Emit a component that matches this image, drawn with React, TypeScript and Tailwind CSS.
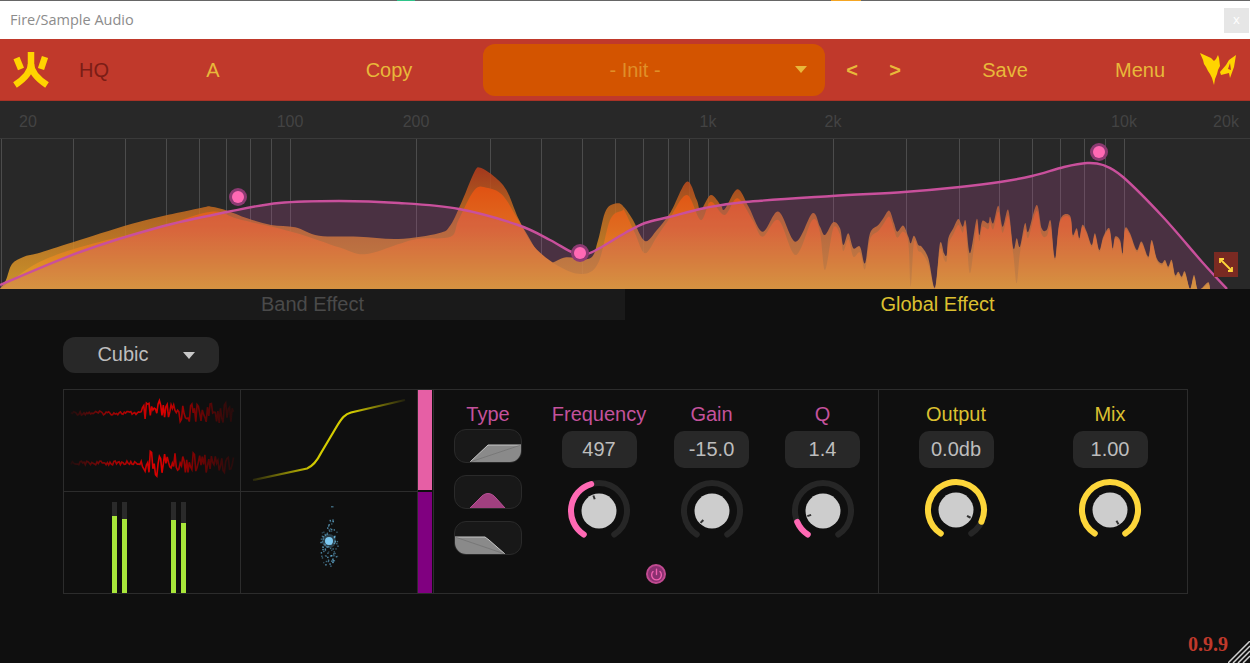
import { Power } from "lucide-react";

type Pt = [number, number];

const rnd = (i: number) => {
  const s = Math.sin(i * 12.9898) * 43758.5453;
  return s - Math.floor(s);
};

// smooth line through points, catmull-rom to bezier
function smooth(pts: Pt[]) {
  let d = `M${pts[0][0].toFixed(1)} ${pts[0][1].toFixed(1)}`;
  for (let i = 0; i < pts.length - 1; i++) {
    const p0 = pts[Math.max(i - 1, 0)];
    const p1 = pts[i];
    const p2 = pts[i + 1];
    const p3 = pts[Math.min(i + 2, pts.length - 1)];
    const c1x = p1[0] + (p2[0] - p0[0]) / 6;
    const c1y = p1[1] + (p2[1] - p0[1]) / 6;
    const c2x = p2[0] - (p3[0] - p1[0]) / 6;
    const c2y = p2[1] - (p3[1] - p1[1]) / 6;
    d += `C${c1x.toFixed(1)} ${c1y.toFixed(1)} ${c2x.toFixed(1)} ${c2y.toFixed(1)} ${p2[0].toFixed(1)} ${p2[1].toFixed(1)}`;
  }
  return d;
}

const GRAPH_TOP = 101;
// traced in crop units: left half, right half, and the high end of the graph
const left = (p: Pt[]): Pt[] => p.map(([x, y]) => [x / 2.508, 140 + y / 3 - GRAPH_TOP]);
const right = (p: Pt[]): Pt[] => p.map(([x, y]) => [625 + x / 2.508, 140 + y / 3 - GRAPH_TOP]);
const high = (p: Pt[]): Pt[] => p.map(([x, y]) => [820 + x / 3, 195 + y / 3 - GRAPH_TOP]);

const highTrace: Pt[] = [
  [0, 95], [15, 120], [40, 82], [60, 100], [70, 150], [85, 115], [100, 160], [120, 155], [135, 205], [150, 115], [175, 90], [190, 70], [208, 47], [222, 85], [232, 110], [250, 92], [265, 125], [272, 145], [282, 122], [295, 150], [305, 155], [325, 190], [345, 278], [360, 145], [372, 175], [380, 180], [385, 130], [400, 100], [415, 72], [428, 95], [437, 78], [450, 175], [470, 72], [478, 120], [487, 78], [505, 85], [510, 65], [520, 85], [535, 32], [548, 95], [565, 45], [580, 160], [590, 130], [600, 155], [615, 85], [625, 110], [650, 30], [665, 100], [680, 105], [692, 78], [705, 190], [720, 75], [750, 62], [758, 120], [770, 100], [778, 130], [787, 90], [800, 110], [815, 150], [825, 115], [838, 165], [850, 125], [868, 100], [878, 160], [885, 125], [900, 135], [908, 175], [915, 100], [930, 115], [950, 165], [965, 140], [985, 185], [995, 135], [1010, 190], [1025, 205], [1035, 195], [1045, 215], [1055, 195], [1065, 240], [1075, 230], [1085, 245], [1095, 230], [1110, 282], [1122, 240], [1132, 282], [1145, 280], [1165, 262], [1170, 282],
];

// the front layer sits a little lower and has the deep notches
const notches: Record<number, number> = { 15: 225, 100: 185, 272: 275, 450: 235, 590: 265 };
const highFront: Pt[] = highTrace.map(([x, y]) => [x, notches[x] ?? Math.min(282, y + (x < 700 ? 18 : 6))]);

const backPts: Pt[] = [
  ...left([[0, 447], [15, 420], [30, 372], [60, 350], [100, 338], [200, 300], [350, 245], [500, 205], [530, 200], [570, 212], [620, 235], [680, 255], [740, 262], [800, 287], [900, 290], [1000, 297], [1100, 280], [1130, 255], [1160, 180], [1190, 95], [1205, 83], [1240, 110], [1270, 150], [1300, 235], [1330, 300], [1360, 360], [1380, 370], [1420, 352], [1480, 355], [1500, 300], [1520, 210], [1550, 190]]),
  ...right([[0, 205], [20, 240], [50, 303], [80, 270], [115, 215], [155, 125], [180, 180], [190, 210], [215, 165], [240, 195], [250, 208], [282, 148], [310, 200], [345, 275], [385, 215], [428, 305], [470, 220]]),
  ...high(highTrace),
];

const frontPts: Pt[] = [
  ...left([[0, 447], [40, 412], [100, 365], [200, 322], [400, 260], [530, 215], [600, 238], [740, 278], [850, 322], [915, 343], [1000, 312], [1050, 296], [1130, 290], [1150, 240], [1190, 150], [1220, 143], [1260, 165], [1300, 240], [1340, 320], [1400, 378], [1460, 402], [1500, 370], [1530, 240], [1560, 212]]),
  ...right([[0, 215], [25, 280], [50, 340], [80, 290], [112, 235], [155, 165], [190, 240], [215, 185], [250, 225], [282, 175], [320, 240], [345, 290], [385, 240], [428, 345], [470, 240]]),
  ...high(highFront),
];

const curvePts: Pt[] = [
  [0, 285], [80, 252], [160, 227], [227, 212], [279, 203], [339, 201], [399, 203], [459, 209], [518, 225], [550, 240], [574, 253], [590, 253], [625, 233], [645, 223], [669, 217], [705, 208], [745, 202], [832, 196], [904, 192], [960, 187], [1000, 182], [1032, 176], [1064, 167], [1087, 163], [1103, 165], [1123, 177], [1163, 217], [1203, 263], [1227, 289],
].map(([x, y]) => [x, y - GRAPH_TOP] as Pt);

const gridXs = [1, 73, 125, 166, 199, 226, 250, 271, 290, 416, 490, 541, 582, 615, 643, 668, 689, 708, 833, 906, 959, 999, 1032, 1060, 1084, 1105, 1124];
const axis: [string, number][] = [["20", 28], ["100", 290], ["200", 416], ["1k", 708], ["2k", 833], ["10k", 1124], ["20k", 1226]];

function Graph() {
  const H = 188;
  const closed = (pts: Pt[]) => `${smooth(pts)}L${pts[pts.length - 1][0]} ${H}L0 ${H}Z`;
  return (
    <svg width="1250" height={H} className="block">
      <defs>
        <linearGradient id="backFill" gradientUnits="userSpaceOnUse" x1="0" y1="60" x2="0" y2="188">
          <stop offset="0" stopColor="#b8331a" />
          <stop offset="0.35" stopColor="#c4681f" />
          <stop offset="1" stopColor="#e6a82c" />
        </linearGradient>
        <linearGradient id="frontFill" gradientUnits="userSpaceOnUse" x1="0" y1="70" x2="0" y2="188">
          <stop offset="0" stopColor="#e0480e" />
          <stop offset="0.5" stopColor="#e06c20" />
          <stop offset="1" stopColor="#dca626" />
        </linearGradient>
      </defs>
      <rect width="1250" height={H} fill="#282828" />
      <rect y="37" width="1250" height="1" fill="#3a3a3a" />
      {gridXs.map((x) => (
        <rect key={x} x={x} y="38" width="1" height={H - 38} fill="#4c4c4c" />
      ))}
      {axis.map(([t, x]) => (
        <text key={t} x={x} y="26" textAnchor="middle" fontSize="16" fill="#434343" fontFamily="'Liberation Sans', sans-serif">
          {t}
        </text>
      ))}
      <path d={closed(backPts)} fill="url(#backFill)" opacity="0.85" />
      <path d={closed(frontPts)} fill="url(#frontFill)" />
      <path d={closed(curvePts)} fill="#c0509a" opacity="0.23" />
      <path d={smooth(curvePts)} fill="none" stroke="#c9509c" strokeWidth="2.4" />
      {[[238, 96], [580, 152], [1099, 51]].map(([x, y]) => (
        <g key={x}>
          <circle cx={x} cy={y} r="9" fill="#8c3a72" />
          <circle cx={x} cy={y} r="6" fill="#ff69b4" />
        </g>
      ))}
    </svg>
  );
}

function FireLogo() {
  return (
    <svg width="40" height="40" viewBox="0 0 40 40" fill="none" stroke="#ffd400" strokeWidth="6.5">
      <path d="M20 2V14C20 22 13 29 4 35" />
      <path d="M20 14C20 22 27 29 36 35" />
      <path d="M5.5 8L10 19" />
      <path d="M34 7L30 19" />
    </svg>
  );
}

function WingLogo() {
  return (
    <svg width="40" height="36" viewBox="0 0 40 36" fill="#ffd400">
      <path d="M1 1L12 6L15 9L17 7L19 3L20 6L21 14L19 18L18 22L16 27L15 33L13 26L11 22L9 19L7 15L5 12L4 8Z" />
      <path fillRule="evenodd" d="M37 3L35 15L31 26L30 21L22 23L21 20L27 13L30 8ZM31 11L29 17L32 18Z" />
    </svg>
  );
}

function Caret({ className }: { className: string }) {
  return (
    <svg width="12" height="7" viewBox="0 0 12 7" className={className}>
      <path d="M0 0H12L6 7Z" fill="currentColor" />
    </svg>
  );
}

function Header() {
  const text = "text-[20px] text-[#e8b83a] text-center";
  return (
    <div className="flex h-[62px] items-center bg-[#c0392b] border-b border-[#a93226]">
      <div className="flex w-[62px] justify-center pr-[1px]">
        <FireLogo />
      </div>
      <div className="w-[64px] text-center text-[20px] text-[#7b1d16]">HQ</div>
      <div className={`w-[174px] ${text}`}>A</div>
      <div className={`w-[178px] ${text}`}>Copy</div>
      <div className="ml-[5px] flex h-[52px] w-[342px] items-center rounded-[12px] bg-[#d35400]">
        <div className="w-[304px] text-center text-[20px] text-[#e08f28]">- Init -</div>
        <Caret className="ml-[8px] text-[#e8b83a]" />
      </div>
      <div className={`w-[54px] font-bold ${text}`}>&lt;</div>
      <div className={`w-[32px] font-bold ${text}`}>&gt;</div>
      <div className={`w-[188px] ${text}`}>Save</div>
      <div className={`w-[82px] ${text}`}>Menu</div>
      <div className="flex flex-1 pl-[18px]">
        <WingLogo />
      </div>
    </div>
  );
}

function wavePath(seed: number, mid: number) {
  const pts: string[] = [];
  let i = 0;
  for (let x = 7; x < 170; x += 1.3) {
    let amp = 2;
    if (x > 78 && x < 106) amp = 15 - Math.abs(x - 92) * 0.5;
    else if (x >= 106) amp = 10;
    const y = mid + (rnd(i + seed) - 0.5) * 2 * amp;
    pts.push(`${i === 0 ? "M" : "L"}${x.toFixed(1)} ${y.toFixed(1)}`);
    i++;
  }
  return pts.join("");
}

function WaveScope() {
  return (
    <svg width="176" height="101" className="block">
      <defs>
        <linearGradient id="waveFade" gradientUnits="userSpaceOnUse" x1="7" y1="0" x2="170" y2="0">
          <stop offset="0" stopColor="#c00000" stopOpacity="0.1" />
          <stop offset="0.25" stopColor="#c00000" stopOpacity="0.8" />
          <stop offset="0.55" stopColor="#e00000" />
          <stop offset="0.75" stopColor="#900000" stopOpacity="0.85" />
          <stop offset="1" stopColor="#800000" stopOpacity="0.2" />
        </linearGradient>
      </defs>
      <path d={wavePath(5, 23)} fill="none" stroke="url(#waveFade)" strokeWidth="1.6" />
      <path d={wavePath(90, 73)} fill="none" stroke="url(#waveFade)" strokeWidth="1.6" />
    </svg>
  );
}

function TransferScope() {
  return (
    <svg width="175" height="101" className="block">
      <defs>
        <linearGradient id="transferFade" gradientUnits="userSpaceOnUse" x1="12" y1="0" x2="164" y2="0">
          <stop offset="0" stopColor="#c8c000" stopOpacity="0.15" />
          <stop offset="0.4" stopColor="#d4cc00" />
          <stop offset="0.65" stopColor="#d4cc00" />
          <stop offset="1" stopColor="#c8c000" stopOpacity="0.1" />
        </linearGradient>
      </defs>
      <path d="M12 90L66 78.5C72 76 76 71 80 63L96 36C101 28 104 24 110 22.5L164 10" fill="none" stroke="url(#transferFade)" strokeWidth="2.2" />
    </svg>
  );
}

function Meters() {
  return (
    <div className="flex h-full items-end pl-[48px]">
      <div className="flex gap-[5px]">
        <div className="flex h-[91px] w-[5px] items-end bg-[#2a2a2a]"><div className="h-[77px] w-full bg-[#a8e63a]" /></div>
        <div className="flex h-[91px] w-[5px] items-end bg-[#2a2a2a]"><div className="h-[74px] w-full bg-[#a8e63a]" /></div>
      </div>
      <div className="ml-[44px] flex gap-[5px]">
        <div className="flex h-[91px] w-[5px] items-end bg-[#2a2a2a]"><div className="h-[73px] w-full bg-[#a8e63a]" /></div>
        <div className="flex h-[91px] w-[5px] items-end bg-[#2a2a2a]"><div className="h-[70px] w-full bg-[#a8e63a]" /></div>
      </div>
    </div>
  );
}

function Vectorscope() {
  const cx = 88;
  const cy = 49;
  const dots = Array.from({ length: 90 }, (_, i) => {
    const a = rnd(i + 7) * Math.PI * 2;
    const r = Math.sqrt(rnd(i + 200));
    return { x: cx + Math.cos(a) * r * 9, y: cy + 2 + Math.sin(a) * r * 26, o: 0.3 + rnd(i + 500) * 0.5 };
  });
  return (
    <svg width="175" height="101" className="block">
      {dots.map((d, i) => (
        <rect key={i} x={d.x} y={d.y} width="1.4" height="1.4" fill="#6ab8e0" opacity={d.o} />
      ))}
      <rect x="90" y="14" width="2.5" height="1.5" fill="#6ab8e0" opacity="0.5" />
      <circle cx={cx} cy={cy} r="7" fill="#7cc8f0" opacity="0.25" />
      <circle cx={cx} cy={cy} r="4" fill="#7cc8f0" />
    </svg>
  );
}

function Knob({ value, pointer, color }: { value: number; pointer: number; color: string }) {
  const gap = 147;
  const polar = (deg: number, r: number): Pt => {
    const a = (deg * Math.PI) / 180;
    return [33 + Math.sin(a) * r, 33 - Math.cos(a) * r];
  };
  const arc = (from: number, to: number) => {
    const [x1, y1] = polar(from, 28);
    const [x2, y2] = polar(to, 28);
    return `M${x1} ${y1}A28 28 0 ${to - from > 180 ? 1 : 0} 1 ${x2} ${y2}`;
  };
  const [tx1, ty1] = polar(pointer, 12.5);
  const [tx2, ty2] = polar(pointer, 16.5);
  return (
    <svg width="66" height="66" className="block">
      <path d={arc(-gap, gap)} fill="none" stroke="#262626" strokeWidth="6" strokeLinecap="round" />
      {value > 0 && (
        <path d={arc(-gap, -gap + value * gap * 2)} fill="none" stroke={color} strokeWidth="6" strokeLinecap="round" />
      )}
      <circle cx="33" cy="33" r="17.5" fill="#cdcdcd" />
      <line x1={tx1} y1={ty1} x2={tx2} y2={ty2} stroke="#333" strokeWidth="2" />
    </svg>
  );
}

function Control({ label, value, labelClass, children }: { label: string; value: string; labelClass: string; children: React.ReactNode }) {
  return (
    <div className="flex flex-col items-center pt-[13px]">
      <div className={`h-[23px] text-[20px] leading-[23px] ${labelClass}`}>{label}</div>
      <div className="mt-[5px] flex h-[37px] w-[75px] items-center justify-center rounded-[10px] bg-[#282828] pb-[2px] text-[20px] text-[#bdbdbd]">
        {value}
      </div>
      <div className="mt-[10px]">{children}</div>
    </div>
  );
}

function TypeButton({ children }: { children: React.ReactNode }) {
  return (
    <div className="h-[34px] w-[68px] overflow-hidden rounded-[12px] border border-[#2a2a2a] bg-[#181818]">
      <svg width="66" height="32" className="block">{children}</svg>
    </div>
  );
}

function TypeColumn() {
  return (
    <div className="flex w-[108px] flex-col items-center pt-[13px]">
      <div className="h-[23px] text-[20px] leading-[23px] text-[#c4529c]">Type</div>
      <div className="mt-[3px] flex flex-col gap-[12px]">
        <TypeButton>
          <path d="M15 32L33 15H66V32Z" fill="#8a8a8a" />
          <path d="M15 32L33 15H66" fill="none" stroke="#c8c8c8" strokeWidth="1" />
          <path d="M15 32L66 15" stroke="#6c6c6c" strokeWidth="0.6" />
        </TypeButton>
        <TypeButton>
          <path d="M15 32L25 22C30 16 36 16 41 22L50 32Z" fill="#a0407f" />
          <path d="M15 32L25 22C30 16 36 16 41 22L50 32" fill="none" stroke="#b85095" strokeWidth="1" />
        </TypeButton>
        <TypeButton>
          <path d="M0 15H30L34 18L50 32H0Z" fill="#8a8a8a" />
          <path d="M0 15H30L34 18L50 32" fill="none" stroke="#c8c8c8" strokeWidth="1" />
          <path d="M0 15L50 32" stroke="#6c6c6c" strokeWidth="0.6" />
        </TypeButton>
      </div>
    </div>
  );
}

export default function App() {
  const pink = "#ff69b4";
  const yellow = "#fdd63a";
  return (
    <div className="relative flex h-[663px] w-[1250px] flex-col overflow-hidden bg-[#0f0f0f] font-['Liberation_Sans',sans-serif]">
      <div className="flex h-[39px] flex-col bg-white">
        <div className="flex h-px">
          <div className="w-[397px] bg-[#666]" />
          <div className="w-[18px] bg-[#2fc48a]" />
          <div className="w-[416px] bg-[#666]" />
          <div className="w-[30px] bg-[#f5a623]" />
          <div className="flex-1 bg-[#666]" />
        </div>
        <div className="flex flex-1 items-center justify-between pl-[10px] pr-px">
          <span className="font-['Open_Sans',sans-serif] text-[14.5px] text-[#8c8c8c]">Fire/Sample Audio</span>
          <div className="flex h-[25px] w-[25px] items-center justify-center bg-[#e6e6e6] font-['Open_Sans',sans-serif] text-[13px] text-white">
            x
          </div>
        </div>
      </div>

      <Header />

      <div className="relative h-[188px]">
        <Graph />
        <div className="absolute left-[1214px] top-[151px] flex h-[25px] w-[24px] items-center justify-center bg-[#7a2a22]">
          <svg width="14" height="14" viewBox="0 0 14 14" fill="none" stroke="#ffd63a" strokeWidth="1.8">
            <path d="M2 2L12 12" />
            <path d="M1 5V1H5" />
            <path d="M13 9V13H9" />
          </svg>
        </div>
      </div>

      <div className="flex h-[31px] text-[20px]">
        <div className="flex w-[625px] items-center justify-center bg-[#1a1a1a] pb-[2px] text-[#4a4a4a]">Band Effect</div>
        <div className="flex flex-1 items-center justify-center pb-[2px] text-[#dcc030]">Global Effect</div>
      </div>

      <div className="ml-[63px] mt-[17px] flex h-[36px] w-[156px] items-center rounded-[12px] bg-[#282828] text-[20px] text-[#bdbdbd]">
        <div className="w-[120px] pb-[2px] text-center">Cubic</div>
        <Caret className="text-[#c8c8c8]" />
      </div>

      <div className="ml-[63px] mt-[16px] flex h-[205px]">
        <div className="grid w-[355px] grid-cols-[177px_176px] grid-rows-[102px_101px] border border-[#2c2c2c]">
          <div className="border-b border-r border-[#2c2c2c]"><WaveScope /></div>
          <div className="border-b border-[#2c2c2c]"><TransferScope /></div>
          <div className="border-r border-[#2c2c2c]"><Meters /></div>
          <div><Vectorscope /></div>
        </div>

        <div className="flex w-[15px] flex-col gap-[2px] border-y border-[#2c2c2c] pr-px">
          <div className="h-[100px] bg-[#e65fa5]" />
          <div className="flex-1 bg-[#800080]" />
        </div>

        <div className="flex w-[446px] flex-col items-center border border-[#2c2c2c]">
          <div className="flex w-full">
            <TypeColumn />
            <div className="w-[114px]">
              <Control label="Frequency" value="497" labelClass="text-[#c4529c]">
                <Knob value={0.445} pointer={-20} color={pink} />
              </Control>
            </div>
            <div className="w-[111px]">
              <Control label="Gain" value="-15.0" labelClass="text-[#c4529c]">
                <Knob value={0} pointer={-136} color={pink} />
              </Control>
            </div>
            <div className="w-[111px]">
              <Control label="Q" value="1.4" labelClass="text-[#c4529c]">
                <Knob value={0.116} pointer={-108} color={pink} />
              </Control>
            </div>
          </div>
          <div className="mt-[9px] flex h-[20px] w-[20px] items-center justify-center rounded-full border-2 border-[#c04a90] bg-[#8a3070]">
            <Power size={13} strokeWidth={2.5} color="#f060b0" />
          </div>
        </div>

        <div className="grid w-[309px] grid-cols-[154px_154px] border-y border-r border-[#2c2c2c]">
          <Control label="Output" value="0.0db" labelClass="text-[#dcc030]">
            <div className="-mt-px">
              <Knob value={0.89} pointer={118} color={yellow} />
            </div>
          </Control>
          <Control label="Mix" value="1.00" labelClass="text-[#dcc030]">
            <div className="-mt-px">
              <Knob value={1} pointer={149} color={yellow} />
            </div>
          </Control>
        </div>
      </div>

      <div className="mt-[38px] flex h-[24px] items-center justify-end pr-[22px] font-['Liberation_Serif',serif] text-[20px] font-bold text-[#c0392b]">
        0.9.9
      </div>

      <svg width="22" height="22" className="absolute bottom-0 right-0" stroke="#d0d0d0" strokeWidth="1.5">
        <path d="M22 0L0 22M22 5L5 22M22 10L10 22M22 15L15 22" />
      </svg>
    </div>
  );
}
